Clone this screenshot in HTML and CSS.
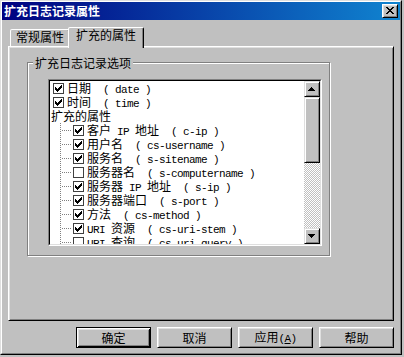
FILE: index.html
```html
<!DOCTYPE html>
<html lang="zh-CN">
<head>
<meta charset="utf-8">
<title>扩充日志记录属性</title>
<link rel="stylesheet" href="styles.css">
</head>
<body>
<div class="window">
  <div class="frame">
    <div class="titlebar">
      <span class="title">扩充日志记录属性</span>
      <span class="close"><svg class="px" width="8" height="7" viewBox="0 0 8 7"><path d="M0 0h2v1H0z M6 0h2v1H6z M1 1h2v1H1z M5 1h2v1H5z M2 2h4v1H2z M3 3h2v1H3z M2 4h4v1H2z M1 5h2v1H1z M5 5h2v1H5z M0 6h2v1H0z M6 6h2v1H6z"/></svg></span>
    </div>
    <div class="body">
      <div class="tabs">
        <div class="tab">常规属性</div>
        <div class="tab active">扩充的属性</div>
      </div>
      <div class="panel">
        <div class="group">
          <span class="legend">扩充日志记录选项</span>
          <div class="listbox">
            <div class="listinner">
              <div class="items">
                <div class="row top"><span class="cb"><svg class="px" width="7" height="7" viewBox="0 0 7 7"><path d="M6 0h1v1H6z M5 1h2v1H5z M0 2h1v1H0z M4 2h3v1H4z M0 3h2v1H0z M3 3h3v1H3z M0 4h5v1H0z M1 5h3v1H1z M2 6h1v1H2z"/></svg></span><span class="lbl">日期<span class="a">  ( date )</span></span></div>
                <div class="row top"><span class="cb"><svg class="px" width="7" height="7" viewBox="0 0 7 7"><path d="M6 0h1v1H6z M5 1h2v1H5z M0 2h1v1H0z M4 2h3v1H4z M0 3h2v1H0z M3 3h3v1H3z M0 4h5v1H0z M1 5h3v1H1z M2 6h1v1H2z"/></svg></span><span class="lbl">时间<span class="a">  ( time )</span></span></div>
                <div class="row parent"><span class="lbl">扩充的属性</span></div>
                <div class="row child"><span class="tree"></span><span class="cb"><svg class="px" width="7" height="7" viewBox="0 0 7 7"><path d="M6 0h1v1H6z M5 1h2v1H5z M0 2h1v1H0z M4 2h3v1H4z M0 3h2v1H0z M3 3h3v1H3z M0 4h5v1H0z M1 5h3v1H1z M2 6h1v1H2z"/></svg></span><span class="lbl">客户<span class="a"> IP </span>地址<span class="a">  ( c-ip )</span></span></div>
                <div class="row child"><span class="tree"></span><span class="cb"><svg class="px" width="7" height="7" viewBox="0 0 7 7"><path d="M6 0h1v1H6z M5 1h2v1H5z M0 2h1v1H0z M4 2h3v1H4z M0 3h2v1H0z M3 3h3v1H3z M0 4h5v1H0z M1 5h3v1H1z M2 6h1v1H2z"/></svg></span><span class="lbl">用户名<span class="a">  ( cs-username )</span></span></div>
                <div class="row child"><span class="tree"></span><span class="cb"><svg class="px" width="7" height="7" viewBox="0 0 7 7"><path d="M6 0h1v1H6z M5 1h2v1H5z M0 2h1v1H0z M4 2h3v1H4z M0 3h2v1H0z M3 3h3v1H3z M0 4h5v1H0z M1 5h3v1H1z M2 6h1v1H2z"/></svg></span><span class="lbl">服务名<span class="a">  ( s-sitename )</span></span></div>
                <div class="row child"><span class="tree"></span><span class="cb off"></span><span class="lbl">服务器名<span class="a">  ( s-computername )</span></span></div>
                <div class="row child"><span class="tree"></span><span class="cb"><svg class="px" width="7" height="7" viewBox="0 0 7 7"><path d="M6 0h1v1H6z M5 1h2v1H5z M0 2h1v1H0z M4 2h3v1H4z M0 3h2v1H0z M3 3h3v1H3z M0 4h5v1H0z M1 5h3v1H1z M2 6h1v1H2z"/></svg></span><span class="lbl">服务器<span class="a"> IP </span>地址<span class="a">  ( s-ip )</span></span></div>
                <div class="row child"><span class="tree"></span><span class="cb"><svg class="px" width="7" height="7" viewBox="0 0 7 7"><path d="M6 0h1v1H6z M5 1h2v1H5z M0 2h1v1H0z M4 2h3v1H4z M0 3h2v1H0z M3 3h3v1H3z M0 4h5v1H0z M1 5h3v1H1z M2 6h1v1H2z"/></svg></span><span class="lbl">服务器端口<span class="a">  ( s-port )</span></span></div>
                <div class="row child"><span class="tree"></span><span class="cb"><svg class="px" width="7" height="7" viewBox="0 0 7 7"><path d="M6 0h1v1H6z M5 1h2v1H5z M0 2h1v1H0z M4 2h3v1H4z M0 3h2v1H0z M3 3h3v1H3z M0 4h5v1H0z M1 5h3v1H1z M2 6h1v1H2z"/></svg></span><span class="lbl">方法<span class="a">  ( cs-method )</span></span></div>
                <div class="row child"><span class="tree"></span><span class="cb"><svg class="px" width="7" height="7" viewBox="0 0 7 7"><path d="M6 0h1v1H6z M5 1h2v1H5z M0 2h1v1H0z M4 2h3v1H4z M0 3h2v1H0z M3 3h3v1H3z M0 4h5v1H0z M1 5h3v1H1z M2 6h1v1H2z"/></svg></span><span class="lbl"><span class="a">URI </span>资源<span class="a">  ( cs-uri-stem )</span></span></div>
                <div class="row child"><span class="tree"></span><span class="cb off"></span><span class="lbl"><span class="a">URI </span>查询<span class="a">  ( cs-uri-query )</span></span></div>
              </div>
              <div class="scrollbar">
                <div class="sbtn up"><svg class="px" width="7" height="4" viewBox="0 0 7 4"><path d="M3 0h1v1H3z M2 1h3v1H2z M1 2h5v1H1z M0 3h7v1H0z"/></svg></div>
                <div class="thumb"></div>
                <div class="track"></div>
                <div class="sbtn down"><svg class="px" width="7" height="4" viewBox="0 0 7 4"><path d="M0 0h7v1H0z M1 1h5v1H1z M2 2h3v1H2z M3 3h1v1H3z"/></svg></div>
              </div>
            </div>
          </div>
        </div>
      </div>
      <div class="buttons">
        <div class="btn default"><span>确定</span></div>
        <div class="btn"><span>取消</span></div>
        <div class="btn"><span>应用<span class="a">(<u>A</u>)</span></span></div>
        <div class="btn"><span>帮助</span></div>
      </div>
    </div>
  </div>
</div>
</body>
</html>
```
FILE: styles.css
```css
* { box-sizing: border-box; }
html, body { margin: 0; padding: 0; }
body {
  background: #c0c0c0;
  width: 404px;
  height: 357px;
  overflow: hidden;
  font-family: "Noto Sans CJK SC", "Liberation Sans", sans-serif;
  font-size: 12px;
  color: #000;
}
.px { display: block; shape-rendering: crispEdges; fill: #000; }

.window {
  width: 402px;
  height: 355px;
  border: 1px solid;
  border-color: #dfdfdf #000 #000 #dfdfdf;
}
.frame {
  height: 100%;
  border: 1px solid;
  border-color: #fff #808080 #808080 #fff;
}
.titlebar {
  height: 18px;
  background: linear-gradient(to right, #000080, #1084d0);
  display: flex;
  align-items: center;
  justify-content: space-between;
  padding: 0 2px 0 2px;
}
.title {
  color: #fff;
  font-weight: bold;
  line-height: 14px;
}
.close {
  width: 16px;
  height: 14px;
  background: #c0c0c0;
  border: 1px solid;
  border-color: #fff #000 #000 #fff;
  box-shadow: inset 1px 1px #dfdfdf, inset -1px -1px #808080;
  padding: 2px 0 0 3px;
}

.body { padding: 7px 6px 0; }
.tabs {
  display: flex;
  align-items: flex-end;
  height: 19px;
  padding-left: 2px;
}
.tab {
  height: 17px;
  border: 1px solid;
  border-bottom: none;
  border-color: #fff #000 transparent #fff;
  border-radius: 2px 2px 0 0;
  box-shadow: inset -1px 0 #808080;
  padding: 0 5px;
  line-height: 14px;
  background: #c0c0c0;
}
.tab.active {
  height: 21px;
  margin-left: -2px;
  margin-bottom: -2px;
  padding: 0 7px;
  position: relative;
  z-index: 1;
}
.panel {
  height: 275px;
  border: 1px solid;
  border-color: #fff #000 #000 #fff;
  box-shadow: inset 1px 1px #dfdfdf, inset -1px -1px #808080;
  padding: 15px 0 0 18px;
}
.group {
  position: relative;
  width: 303px;
  height: 194px;
  border: 1px solid #808080;
  box-shadow: inset 1px 1px #fff, 1px 1px #fff;
  padding: 16px 0 0 20px;
}
.legend {
  position: absolute;
  left: 5px;
  top: -7px;
  padding: 0 2px;
  background: #c0c0c0;
  line-height: 14px;
}
.listbox {
  width: 274px;
  height: 167px;
  border: 1px solid;
  border-color: #808080 #fff #fff #808080;
}
.listinner {
  height: 100%;
  border: 1px solid;
  border-color: #000 #dfdfdf #dfdfdf #000;
  background: #fff;
  display: flex;
}
.items { flex: 1; overflow: hidden; }
.row {
  height: 14px;
  display: flex;
  align-items: flex-start;
  white-space: pre;
  line-height: 14px;
}
.row.top { padding-left: 3px; }
.row.parent { padding-left: 1px; }
.row.child { padding-left: 10px; }
.tree {
  width: 13px;
  height: 14px;
  background:
    repeating-linear-gradient(to bottom, #808080 0 1px, transparent 1px 2px) left top / 1px 14px no-repeat,
    repeating-linear-gradient(to right, #808080 0 1px, transparent 1px 2px) 2px 7px / 10px 1px no-repeat;
}
.cb {
  width: 11px;
  height: 11px;
  margin: 2px 3px 0 0;
  border: 1px solid #404040;
  background: #fff;
  padding: 1px 0 0 1px;
}
.a {
  font-family: "Liberation Mono", monospace;
  font-size: 11px;
  letter-spacing: -0.6px;
}
.scrollbar {
  width: 16px;
  display: flex;
  flex-direction: column;
}
.sbtn, .thumb {
  background: #c0c0c0;
  border: 1px solid;
  border-color: #dfdfdf #000 #000 #dfdfdf;
  box-shadow: inset 1px 1px #fff, inset -1px -1px #808080;
}
.sbtn { height: 16px; padding-left: 3px; }
.sbtn.up { padding-top: 5px; }
.sbtn.down { padding-top: 5px; }
.thumb { height: 66px; }
.track {
  flex: 1;
  background: conic-gradient(#fff 25%, #c0c0c0 0 50%, #fff 0 75%, #c0c0c0 0) 0 0 / 2px 2px;
}

.buttons {
  display: flex;
  justify-content: flex-end;
  gap: 6px;
  margin-top: 6px;
}
.btn {
  width: 75px;
  height: 21px;
  border: 1px solid;
  border-color: #fff #000 #000 #fff;
  box-shadow: inset 1px 1px #dfdfdf, inset -1px -1px #808080;
  display: flex;
  align-items: center;
  justify-content: center;
  line-height: 14px;
}
.btn.default {
  border-color: #000;
  box-shadow: inset 1px 1px #fff, inset -1px -1px #000, inset 2px 2px #dfdfdf, inset -2px -2px #808080;
}
.btn u { text-decoration-thickness: 1px; text-underline-offset: 1px; }
```
